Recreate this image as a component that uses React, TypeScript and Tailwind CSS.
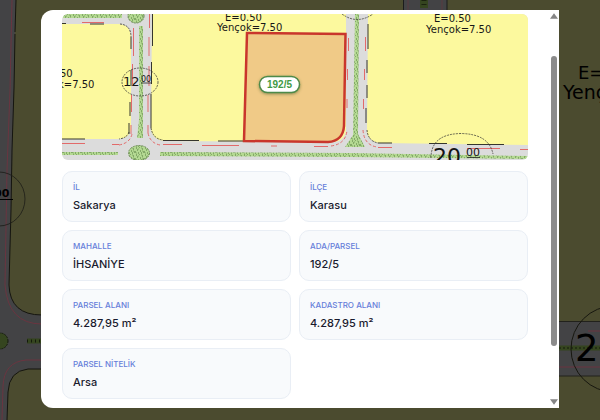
type Field = {
  label: string;
  value: string;
};

const fields: Field[] = [
  { label: 'İL', value: 'Sakarya' },
  { label: 'İLÇE', value: 'Karasu' },
  { label: 'MAHALLE', value: 'İHSANİYE' },
  { label: 'ADA/PARSEL', value: '192/5' },
  { label: 'PARSEL ALANI', value: '4.287,95 m²' },
  { label: 'KADASTRO ALANI', value: '4.287,95 m²' },
  { label: 'PARSEL NİTELİK', value: 'Arsa' },
];

function Backdrop() {
  return (
    <svg
      aria-hidden="true"
      viewBox="0 0 600 420"
      preserveAspectRatio="xMidYMid slice"
      className="absolute inset-0 h-full w-full font-['DejaVu_Sans',sans-serif]"
    >
      <rect width="600" height="420" fill="#4b4b2f" />
      {/* west road */}
      <path
        d="M0 0H16L15 30L14 90L12 170L11 210L9 285Q10 315 42 315V369H28Q9 371 8 392L7 420H0Z"
        fill="#434345"
      />
      <path d="M16 0L15 32M15 34L14 88L12 150M12 150L11 210L9 285Q10 315 42 315M42 369H28Q9 371 8 392L7 420" fill="none" stroke="#15150f" />
      <path d="M12 0L10 90L7 170L5 285Q8 324 42 324M42 360H26Q4 362 3 386L2 420" fill="none" stroke="#6a3540" />
      <ellipse cx="-1" cy="199" rx="26" ry="27" fill="none" stroke="#1c1c16" strokeWidth="0.8" />
      <text x="-6" y="197" fontSize="11" fontWeight="700" fill="#000">00</text>
      <path d="M0 199.500H13" stroke="#000" />
      <circle cx="0" cy="341" r="8" fill="#35451f" stroke="#141a0c" strokeDasharray="2 1" />
      <path d="M27 341H42" stroke="#35451f" strokeWidth="5" />
      <path d="M27 341H42" stroke="#141a0c" strokeWidth="3" strokeDasharray="1 3" />
      {/* north road */}
      <path d="M403 0H447V12H403Z" fill="#434345" />
      <path d="M403.500 0V12M447 0V12" stroke="#1c1c1c" />
      <path d="M408 0V12M442 0V12" stroke="#5a3a40" />
      <path d="M424 0V8" stroke="#35451f" strokeWidth="8" />
      <path d="M424 0V8" stroke="#1b220f" strokeWidth="5" strokeDasharray="1 3" />
      {/* east road */}
      <path d="M555 321H600V376H555Z" fill="#434345" />
      <path d="M555 321.500H600M555 376H600" stroke="#22221c" />
      <path d="M588 331H600M555 367H600" stroke="#6a3540" />
      <path d="M555 348H600" stroke="#35451f" strokeWidth="5" />
      <path d="M555 348H600" stroke="#141a0c" strokeWidth="1" strokeDasharray="2 2" />
      <circle cx="614" cy="349" r="43" fill="none" stroke="#17170f" />
      <text x="575" y="361" fontSize="37" fill="#000">20</text>
      <text x="578" y="79" fontSize="18" fill="#000">E=0.50</text>
      <text x="563" y="99" fontSize="19" fill="#000">Yençok=7.50</text>
    </svg>
  );
}

function ParcelMap() {
  return (
    <svg
      role="img"
      aria-label="192/5"
      viewBox="62 14 466 146"
      className="block w-full rounded-md font-['DejaVu_Sans',sans-serif]"
    >
      <defs>
        <pattern id="foliage" width="9" height="7" patternUnits="userSpaceOnUse">
          <rect width="9" height="7" fill="#b4d992" />
          <path
            d="M1 1h1M4 0h1M7 2h1M2 3h1M5 4h1M0 5h1M8 5h1M3 6h1M6 6h1"
            stroke="#547a3e"
            strokeWidth="1"
          />
          <path d="M3 2h1M6 1h1M1 6h1M7 4h1" stroke="#84ab68" strokeWidth="1" />
        </pattern>
        <filter id="pillShadow" x="-30%" y="-50%" width="160%" height="200%">
          <feDropShadow dx="0" dy="1" stdDeviation="1.500" floodColor="#3b5a2a" floodOpacity="0.55" />
        </filter>
      </defs>

      <rect x="62" y="14" width="466" height="146" fill="#dcdcdc" />

      {/* zoning blocks */}
      <path d="M62 24H119Q131 25 131 38V128Q130 139 117 139H62Z" fill="#fcf99e" />
      <path d="M152 14H346V130Q345 142 332 142L165 141Q151 140 151 127Z" fill="#fcf99e" />
      <path d="M368 14H528V145L380 143Q366 141 367 128Z" fill="#fcf99e" />

      {/* verges */}
      <path d="M63 14H122V18H63Z" fill="url(#foliage)" />
      <path d="M139 26H143V138H137L139 120Z" fill="url(#foliage)" />
      <path d="M62 152H118V155H62Z" fill="url(#foliage)" />
      <path d="M160 152L350 153L528 156V159L350 157L160 156Z" fill="url(#foliage)" />
      <path d="M355 14H359L358 134L365 147H345L353 135Z" fill="url(#foliage)" />
      <ellipse cx="136" cy="16" rx="8" ry="7" fill="url(#foliage)" stroke="#67884f" strokeDasharray="2 1" />
      <ellipse cx="139" cy="153" rx="10.500" ry="7.500" fill="url(#foliage)" stroke="#67884f" strokeDasharray="2 1" />

      {/* block edges */}
      <g fill="none" stroke="#36362e">
        <path d="M62 23.500H66M90 24H104M131 37V49M131 70V86M130 102V116M129 123V134M62 139H85" />
        <path d="M152.500 14V46M151.500 62V84M151 94V128M163 140.500H199M218 141H243" />
        <path d="M368 24V49M367 60V73M367 85V98M366 108V123M378 143H392M429 143.500H447M467 144.500H504" />
        <path d="M120 24Q131 25 131 37M129 132Q127 138 119 139M151 128Q153 139 163 140M367 130Q368 141 378 143" strokeDasharray="2 1" strokeWidth="0.8" />
      </g>

      {/* setback lines */}
      <g fill="none" stroke="#e26a6a">
        <path d="M82 22.500H104M133.500 28V56M132.500 64V84M131.500 95V112M131 125V134M62 143.500H85M112 144.500H119" />
        <path d="M149.500 14V28M149 37V56M149 66V86M148 95V112M148 125V133M163 144.500H182M202 145.500H239M271 146H277M314 146.500H328" />
        <path d="M348.500 38V51M347.500 69V80M347 99V108M365.500 37V51M364.500 69V80M363.500 99V109M378 147.500H392M467 148.500H500M520 149.500H528" />
        <path d="M119 145Q130 143 132 134M148 133Q150 143 160 145M331 146Q346 144 347 130M363 130Q364 145 377 147" strokeDasharray="3 2" />
      </g>

      {/* road width markers */}
      <g fill="none" stroke="#3f3f38" strokeWidth="0.8" strokeDasharray="2 1">
        <ellipse cx="140" cy="82" rx="18" ry="14" />
        <path d="M342 14Q357 25 373 14" />
        <path d="M431 158Q431 134 461 133.500Q489 134 493 154" />
      </g>
      <g fill="#151515">
        <text x="123" y="86" fontSize="13">12</text>
        <text x="141" y="82" fontSize="8">00</text>
        <text x="433" y="164" fontSize="22">20</text>
        <text x="466" y="156" fontSize="11">00</text>
      </g>
      <path d="M141 83H151M467 157.500H480" stroke="#222" strokeWidth="0.8" />

      <g fill="#171717" fontSize="10">
        <text x="60" y="77">50</text>
        <text x="58" y="88">k=7.50</text>
        <text x="225" y="21">E=0.50</text>
        <text x="217" y="31">Yençok=7.50</text>
        <text x="434" y="22">E=0.50</text>
        <text x="426" y="33">Yençok=7.50</text>
      </g>

      {/* selected parcel */}
      <path
        d="M247 33L345.500 34L344 126Q343 141 328 142L244 141Z"
        fill="#f0ca87"
        stroke="#c9362c"
        strokeWidth="2.500"
      />
      <rect x="259.500" y="76.500" width="40" height="16" rx="8" fill="#fff" stroke="#4d8a48" strokeWidth="1.500" filter="url(#pillShadow)" />
      <text x="279.500" y="88" fontSize="10" fontWeight="700" textAnchor="middle" fill="#419a45" fontFamily="Liberation Sans">
        192/5
      </text>
    </svg>
  );
}

function ScrollTrack() {
  return (
    <div aria-hidden="true" className="flex w-2.5 shrink-0 flex-col items-center pt-0.5 pb-0.5">
      <svg viewBox="0 0 6 6" className="h-2 w-2">
        <path d="M3 1L6 5H0Z" fill="#858585" />
      </svg>
      <div className="grow-[36]" />
      <div className="w-1.5 grow-[290] rounded-full bg-[#8b8b8b]" />
      <div className="grow-[52]" />
      <svg viewBox="0 0 6 6" className="h-2 w-2">
        <path d="M0 1H6L3 5Z" fill="#858585" />
      </svg>
    </div>
  );
}

function InfoCard({ label, value }: Field) {
  return (
    <div className="rounded-[10px] border border-[#e9eef5] bg-[#f8fafc] px-2.5 pt-[9px] pb-2">
      <dt className="text-[8px] leading-3 font-medium text-[#667eda]">{label}</dt>
      <dd className="mt-1 text-[11px] leading-4 font-medium text-[#1a1a2e]">{value}</dd>
    </div>
  );
}

export default function App() {
  return (
    <main className="relative min-h-screen overflow-hidden bg-[#4b4b2f] px-[41px] pt-2.5 pb-3 font-['Inter','Liberation_Sans',sans-serif]">
      <Backdrop />
      <section role="dialog" aria-label="192/5" className="relative flex rounded-l-xl bg-white">
        <div className="min-w-0 flex-1 px-[21px] pt-1 pb-[9px]">
          <ParcelMap />
          <dl className="mt-[11px] grid grid-cols-2 gap-2">
            {fields.map((field) => (
              <InfoCard key={field.label} {...field} />
            ))}
          </dl>
        </div>
        <ScrollTrack />
      </section>
    </main>
  );
}
